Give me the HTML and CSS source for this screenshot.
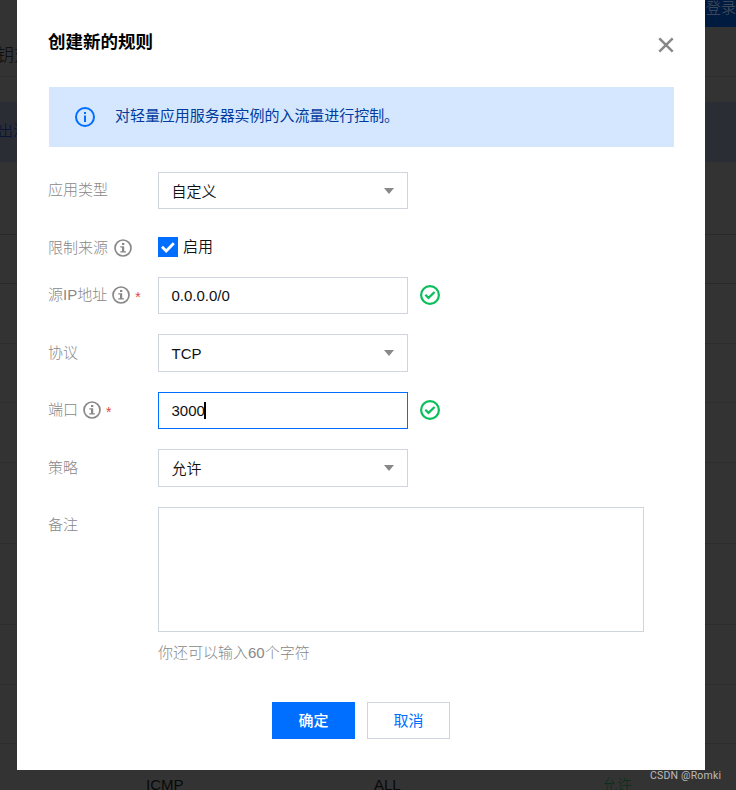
FILE: index.html
```html
<!DOCTYPE html>
<html lang="zh-CN">
<head>
<meta charset="utf-8">
<title>创建新的规则</title>
<link rel="stylesheet" href="styles.css">
</head>
<body>
<svg class="defs" aria-hidden="true">
  <symbol id="alert-info" viewBox="0 0 20 20"><circle cx="10" cy="10" r="9" fill="none" stroke="currentColor" stroke-width="2"/><path d="M9 5h2v2H9zM9 8.5h2V15H9z" fill="currentColor"/></symbol>
  <symbol id="info" viewBox="0 0 18 18"><circle cx="9" cy="9" r="8" fill="none" stroke="currentColor" stroke-width="1.7"/><path d="M8 4h2.3v2H8zM6.3 7.3h3.9v5h1.7v1.2H6.3v-1.2H8V8.5H6.3z" fill="currentColor"/></symbol>
  <symbol id="ok" viewBox="0 0 20 20"><circle cx="10" cy="10" r="8.9" fill="none" stroke="currentColor" stroke-width="2.2"/><path d="M5.3 9.7l3.2 3.2 6.1-5.9" fill="none" stroke="currentColor" stroke-width="2.2"/></symbol>
</svg>
<div class="page">
  <div class="topbar"><span>登录</span></div>
  <div class="tabs"><span>钥对</span></div>
  <div class="band"></div>
  <div class="notice"><span>出流</span></div>
  <div class="row r1"></div><div class="row r2"></div><div class="row r3"></div>
  <div class="row r4"></div><div class="row r5"></div><div class="row r6"></div>
  <div class="row r7"></div><div class="row r8"></div><div class="row r9"></div>
  <div class="row last"><span>ICMP</span><span>ALL</span><span class="allow">允许</span></div>
</div>
<main class="dialog">
  <header class="head">
    <h1>创建新的规则</h1>
    <svg class="close" viewBox="0 0 16 16"><path d="M1.3 1.3l13.4 13.4M14.7 1.3L1.3 14.7"/></svg>
  </header>
  <div class="alert"><svg class="icon20"><use href="#alert-info"/></svg><span>对轻量应用服务器实例的入流量进行控制。</span></div>
  <form class="form">
    <div class="label">应用类型</div>
    <div class="ctl"><div class="box select low">自定义<i></i></div></div>

    <div class="label source">限制来源<svg class="icon18"><use href="#info"/></svg></div>
    <div class="ctl check"><svg class="checkbox" viewBox="0 0 20 20"><rect width="20" height="20"/><path d="M4 9.7l4.2 4.2 7.6-7.7"/></svg><span>启用</span></div>

    <div class="label">源IP地址<svg class="icon18"><use href="#info"/></svg><b>*</b></div>
    <div class="ctl"><div class="box">0.0.0.0/0</div><svg class="icon20 ok"><use href="#ok"/></svg></div>

    <div class="label drop">协议</div>
    <div class="ctl"><div class="box tall select low">TCP<i></i></div></div>

    <div class="label">端口<svg class="icon18"><use href="#info"/></svg><b>*</b></div>
    <div class="ctl"><div class="box focus">3000<span class="caret"></span></div><svg class="icon20 ok"><use href="#ok"/></svg></div>

    <div class="label drop">策略</div>
    <div class="ctl"><div class="box tall select low">允许<i></i></div></div>

    <div class="label">备注</div>
    <div class="ctl memo"><div class="area"></div><p>你还可以输入60个字符</p></div>
  </form>
  <footer class="actions"><div class="btn primary">确定</div><div class="btn">取消</div></footer>
</main>
<div class="credit">CSDN @Romki</div>
</body>
</html>
```
FILE: styles.css
```css
* { box-sizing: border-box; }
body {
  margin: 0;
  width: 736px;
  height: 790px;
  overflow: hidden;
  position: relative;
  background: #333;
  color: #111;
  font: 15px/22px "Liberation Sans", "Noto Sans CJK SC", sans-serif;
}
.defs { position: absolute; width: 0; height: 0; }

.page { display: flex; flex-direction: column; height: 790px; color: #090909; font-weight: 300; }
.topbar { height: 27px; margin-left: 700px; background: #001b40; color: #4a535f; padding-left: 6px; line-height: 15px; white-space: nowrap; }
.tabs { height: 50px; border-bottom: 1px solid #2d2d2e; font-size: 17px; line-height: 58px; }
.tabs span { display: block; margin-left: -3px; }
.band { height: 25px; }
.notice { height: 60px; background: #2a2e34; color: #000f38; line-height: 57px; }
.notice span { display: block; margin-left: -2px; }
.row { border-bottom: 1px solid #2d2d2f; }
.r1 { height: 73px; border-color: #292929; }
.r2 { height: 49px; border-color: #292929; }
.r3 { height: 60px; }
.r4 { height: 59px; }
.r5 { height: 60px; }
.r6, .r7 { height: 81px; }
.r8 { height: 60px; }
.r9 { height: 59px; }
.last { flex: 1; min-height: 0; display: grid; grid-template-columns: 228px 229px 1fr; padding-left: 146px; border: 0; line-height: 81px; }
.last .allow { color: #062f1a; margin-left: -1px; }

.dialog {
  position: absolute;
  left: 17px;
  top: 0;
  width: 688px;
  height: 770px;
  padding: 31px 31px 0 32px;
  background: #fff;
}
.head { display: flex; justify-content: space-between; height: 56px; }
h1 { margin: 0 0 0 -1px; font-size: 17.5px; line-height: 22px; font-weight: 700; color: #000; }
.close { width: 16px; height: 16px; margin-top: 6px; stroke: #888; stroke-width: 2.5; }
.alert { display: flex; align-items: center; height: 60px; padding-left: 26px; background: #d5e7ff; color: #003b9e; }
.alert .icon20 { color: #006eff; }
.alert span { margin: -2px 0 0 20px; letter-spacing: -.05px; }
.icon20 { width: 20px; height: 20px; }
.icon18 { width: 18px; height: 18px; margin: 1px 0 0 5px; color: #888; }

.form { display: grid; grid-template-columns: 109px 1fr; grid-template-rows: 57px 48px 57px 58px 57px 58px 155px; padding-top: 25px; }
.label { display: flex; align-items: center; height: 35px; margin-left: -1px; color: #888; font-weight: 300; white-space: nowrap; }
.label b { margin: 4px 0 0 5px; color: #e54545; font-weight: 400; font-size: 14px; line-height: 14px; }
.label.source { margin: 1px 0 0 -1px; }
.label.source .icon18 { margin-left: 6px; }
.label.drop { margin-top: 1px; }
.ctl { display: flex; align-items: flex-start; }
.box { position: relative; width: 250px; height: 37px; padding-left: 12.5px; border: 1px solid #cfd5de; line-height: 36px; font-weight: 350; }
.box.low { line-height: 38px; }
.box.tall { height: 38px; }
.box.focus { border-color: #006eff; }
.select i { position: absolute; right: 13px; top: 15px; border: 5px solid transparent; border-top: 6px solid #888; border-bottom: 0; }
.caret { display: inline-block; width: 2px; height: 17px; background: #000; vertical-align: -3px; margin-left: -1px; }
.ok { margin: 8px 0 0 12px; color: #0abf5b; }
.check { padding-top: 8px; line-height: 20px; font-weight: 350; }
.checkbox { width: 20px; height: 20px; margin-right: 5px; fill: #006eff; }
.checkbox path { fill: none; stroke: #fff; stroke-width: 2.8; }
.memo { display: block; }
.area { width: 486px; height: 125px; border: 1px solid #cfd5de; }
.memo p { margin: 10px 0 0; color: #888; font-weight: 300; }

.actions { display: flex; gap: 12px; margin: 40px 0 0 223px; }
.btn { width: 83px; height: 37px; border: 1px solid #cfd5de; color: #006eff; line-height: 35px; text-align: center; }
.btn.primary { background: #006eff; border-color: #006eff; color: #fff; font-weight: 500; }
.credit { position: absolute; left: 650px; top: 769px; font: 10.5px/14px Roboto, sans-serif; letter-spacing: .2px; color: #bbb; white-space: nowrap; }
```
